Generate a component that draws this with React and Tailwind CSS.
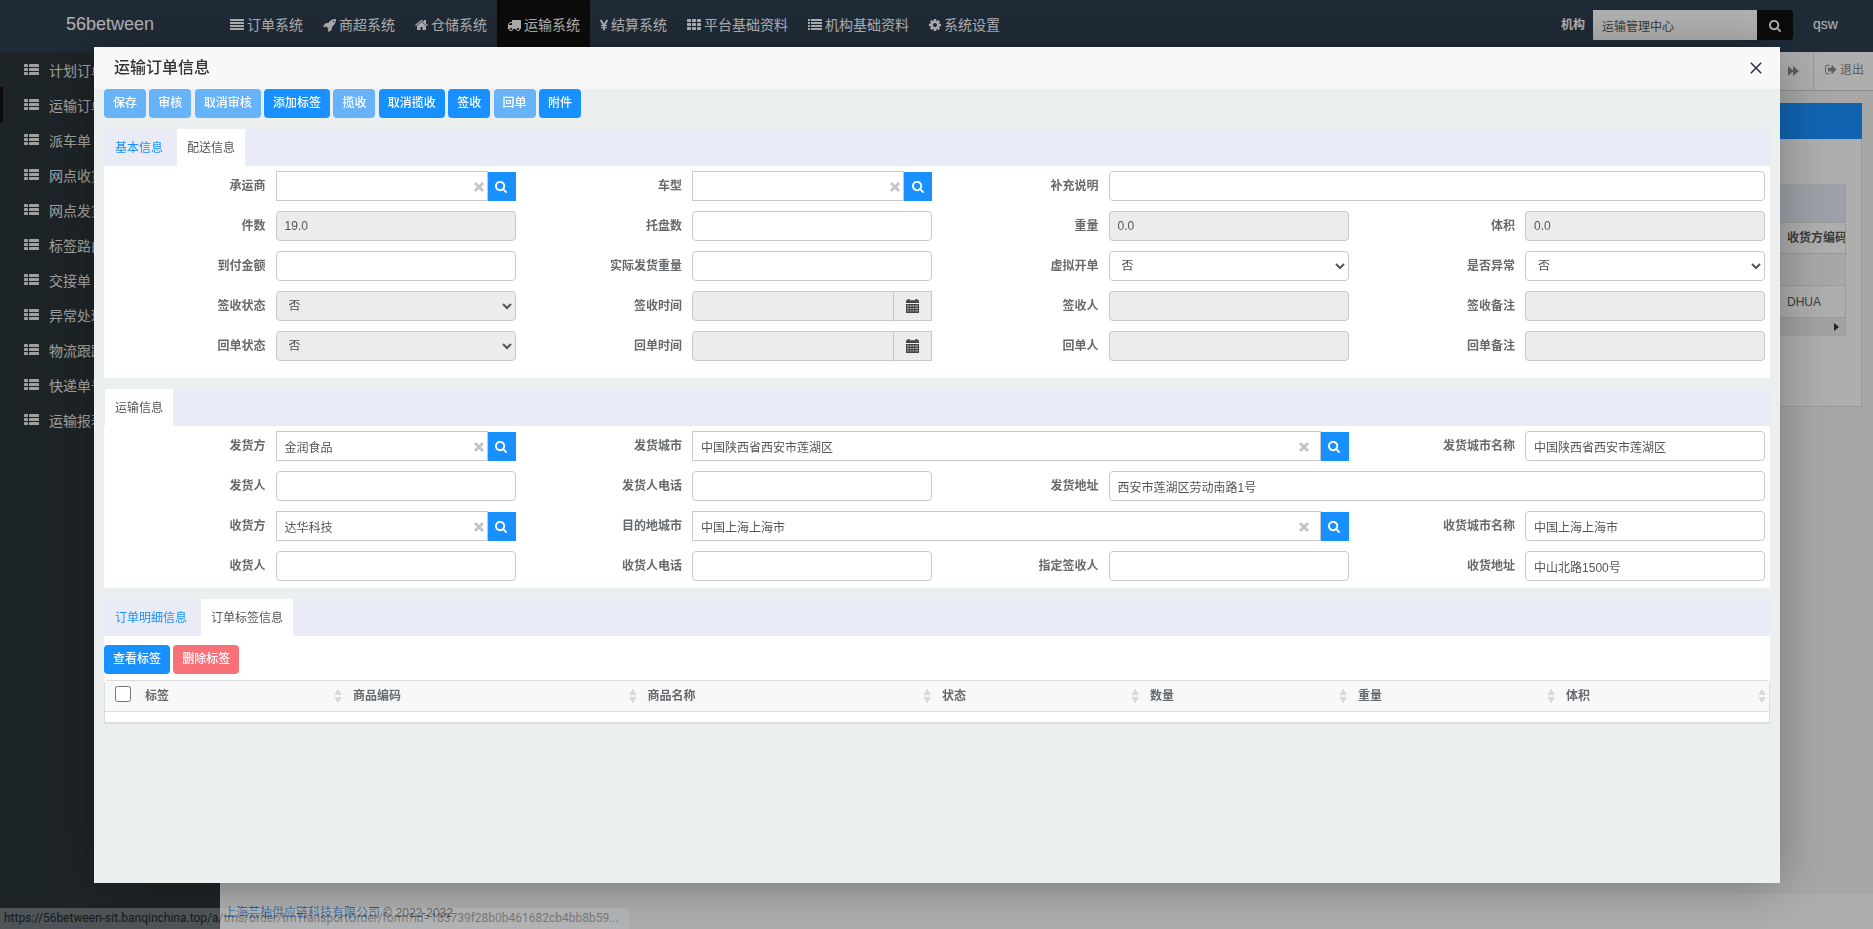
// App.jsx
import React, { useState } from "react";

/* ---------- icons (drawn on a 1792 unit grid, y axis pointing up) ---------- */

const Glyph = ({ d, width = 1792, className = "h-[14px]" }) => (
  <svg
    className={`shrink-0 ${className}`}
    viewBox={`0 0 ${width} 1792`}
    fill="currentColor"
    aria-hidden="true"
  >
    <path transform="translate(0 1536) scale(1 -1)" d={d} />
  </svg>
);

const SearchIcon = ({ className }) => (
  <Glyph
    className={className}
    width={1664}
    d="M1152 704q0 185 -131.5 316.5t-316.5 131.5t-316.5 -131.5t-131.5 -316.5t131.5 -316.5t316.5 -131.5t316.5 131.5t131.5 316.5zM1664 -128q0 -52 -38 -90t-90 -38q-54 0 -90 38l-343 342q-179 -124 -399 -124q-143 0 -273.5 55.5t-225 150t-150 225t-55.5 273.5t55.5 273.5t150 225t225 150t273.5 55.5t273.5 -55.5t225 -150t150 -225t55.5 -273.5q0 -220 -124 -399l343 -343q37 -37 37 -90z"
  />
);

const RocketIcon = () => (
  <Glyph
    width={1664}
    d="M1440 1088q0 40 -28 68t-68 28t-68 -28t-28 -68t28 -68t68 -28t68 28t28 68zM1664 1376q0 -249 -75.5 -430.5t-253.5 -360.5q-81 -80 -195 -176l-20 -379q-2 -16 -16 -26l-384 -224q-7 -4 -16 -4q-12 0 -23 9l-64 64q-13 14 -8 32l85 276l-281 281l-276 -85q-3 -1 -9 -1q-14 0 -23 9l-64 64q-17 19 -5 39l224 384q10 14 26 16l379 20q96 114 176 195q188 187 358 258t431 71q14 0 24 -9.5t10 -22.5z"
  />
);

const HomeIcon = () => (
  <Glyph
    width={1664}
    d="M1408 544v-480q0 -26 -19 -45t-45 -19h-384v384h-256v-384h-384q-26 0 -45 19t-19 45v480q0 1 0.5 3t0.5 3l575 474l575 -474q1 -2 1 -6zM1631 613l-62 -74q-8 -9 -21 -11h-3q-13 0 -21 7l-692 577l-692 -577q-12 -8 -24 -7q-13 2 -21 11l-62 74q-8 10 -7 23.5t11 21.5l719 599q32 26 76 26t76 -26l244 -204v195q0 14 9 23t23 9h192q14 0 23 -9t9 -23v-408l219 -182q10 -8 11 -21.5t-7 -23.5z"
  />
);

const TruckIcon = () => (
  <Glyph
    d="M640 128q0 52 -38 90t-90 38t-90 -38t-38 -90t38 -90t90 -38t90 38t38 90zM256 640h384v256h-158q-13 0 -22 -9l-195 -195q-9 -9 -9 -22v-30zM1536 128q0 52 -38 90t-90 38t-90 -38t-38 -90t38 -90t90 -38t90 38t38 90zM1792 1216v-1024q0 -15 -4 -26.5t-13.5 -18.5t-16.5 -11.5t-23.5 -6t-22.5 -2t-25.5 0t-22.5 0.5q0 -106 -75 -181t-181 -75t-181 75t-75 181h-384q0 -106 -75 -181t-181 -75t-181 75t-75 181h-64q-3 0 -22.5 -0.5t-25.5 0t-22.5 2t-23.5 6t-16.5 11.5t-13.5 18.5t-4 26.5q0 26 19 45t45 19v320q0 8 -0.5 35t0 38t2.5 34.5t6.5 37t14 30.5t22.5 30l198 198q19 19 50.5 32t58.5 13h160v192q0 26 19 45t45 19h1024q26 0 45 -19t19 -45z"
  />
);

const CogIcon = () => (
  <Glyph
    width={1536}
    d="M1024 640q0 106 -75 181t-181 75t-181 -75t-75 -181t75 -181t181 -75t181 75t75 181zM1536 749v-222q0 -12 -8 -23t-20 -13l-185 -28q-19 -54 -39 -91q35 -50 107 -138q10 -12 10 -25t-9 -23q-27 -37 -99 -108t-94 -71q-12 0 -26 9l-138 108q-44 -23 -91 -38q-16 -136 -29 -186q-7 -28 -36 -28h-222q-14 0 -24.5 8.5t-11.5 21.5l-28 184q-49 16 -90 37l-141 -107q-10 -9 -25 -9q-14 0 -25 11q-126 114 -165 168q-7 10 -7 23q0 12 8 23q15 21 51 66.5t54 70.5q-27 50 -41 99l-183 27q-13 2 -21 12.5t-8 23.5v222q0 12 8 23t19 13l186 28q14 46 39 92q-40 57 -107 138q-10 12 -10 24q0 10 9 23q26 36 98.5 107.5t94.5 71.5q13 0 26 -10l138 -107q44 23 91 38q16 136 29 186q7 28 36 28h222q14 0 24.5 -8.5t11.5 -21.5l28 -184q49 -16 90 -37l142 107q9 9 24 9q13 0 25 -10q129 -119 165 -170q7 -8 7 -22q0 -12 -8 -23q-15 -21 -51 -66.5t-54 -70.5q26 -50 41 -98l183 -28q13 -2 21 -12.5t8 -23.5z"
  />
);

const SignOutIcon = () => (
  <Glyph
    width={1664}
    className="h-[13px]"
    d="M640 96q0 -4 1 -20t0.5 -26.5t-3 -23.5t-10 -19.5t-20.5 -6.5h-320q-119 0 -203.5 84.5t-84.5 203.5v704q0 119 84.5 203.5t203.5 84.5h320q13 0 22.5 -9.5t9.5 -22.5q0 -4 1 -20t0.5 -26.5t-3 -23.5t-10 -19.5t-20.5 -6.5h-320q-66 0 -113 -47t-47 -113v-704q0 -66 47 -113t113 -47h312l11.5 -1t11.5 -3t8 -5.5t7 -9t2 -13.5zM1568 640q0 -26 -19 -45l-544 -544q-19 -19 -45 -19t-45 19t-19 45v288h-448q-26 0 -45 19t-19 45v384q0 26 19 45t45 19h448v288q0 26 19 45t45 19t45 -19l544 -544q19 -19 19 -45z"
  />
);

const AlignIcon = () => (
  <svg className="h-[14px] w-[14px] shrink-0" viewBox="0 0 14 14" fill="currentColor" aria-hidden="true">
    <path d="M0 1h14v2H0zM0 4h14v2H0zM0 7h14v2H0zM0 10h14v2H0z" />
  </svg>
);

const YenIcon = () => (
  <svg className="h-[14px] w-[8px] shrink-0" viewBox="0 0 8 14" fill="none" stroke="currentColor" aria-hidden="true">
    <path d="M.7 2 4 7.4 7.3 2M4 7v5.2" strokeWidth="1.9" />
    <path d="M1 7.6h6M1 9.8h6" strokeWidth="1.1" />
  </svg>
);

const ThIcon = () => (
  <svg className="h-[14px] w-[14px] shrink-0" viewBox="0 0 14 14" fill="currentColor" aria-hidden="true">
    {[1, 5, 9].map((y) =>
      [0, 5, 10].map((x) => <rect key={`${x}-${y}`} x={x} y={y} width="4" height="3" rx=".4" />)
    )}
  </svg>
);

const ListIcon = () => (
  <svg className="h-[14px] w-[14px] shrink-0" viewBox="0 0 14 14" fill="currentColor" aria-hidden="true">
    {[1, 4, 7, 10].map((y) => (
      <React.Fragment key={y}>
        <rect x="0" y={y} width="2" height="2" />
        <rect x="3" y={y} width="11" height="2" />
      </React.Fragment>
    ))}
  </svg>
);

const ThListIcon = () => (
  <svg className="mb-[2px] h-[12px] w-[15px] shrink-0" viewBox="0 0 15 12" fill="currentColor" aria-hidden="true">
    {[0, 4, 8].map((y) => (
      <React.Fragment key={y}>
        <rect x="0" y={y} width="4" height="3" rx=".4" />
        <rect x="5" y={y} width="10" height="3" rx=".4" />
      </React.Fragment>
    ))}
  </svg>
);

const ClearIcon = () => (
  <svg className="h-[10px] w-[10px]" viewBox="0 0 10 10" stroke="currentColor" strokeWidth="2.8" aria-hidden="true">
    <path d="M1 1l8 8M9 1L1 9" />
  </svg>
);

const CalendarIcon = () => (
  <svg className="h-[14px] w-[13px]" viewBox="0 0 13 14" fill="currentColor" aria-hidden="true">
    <path d="M0 1.2h1.6V0h2v1.2h5.8V0h2v1.2H13V4H0z" />
    <path
      fillRule="evenodd"
      d="M0 5h13v9H0zM1 6.6v.8h1.8v-.8zM3.8 6.6v.8h1.7v-.8zM6.5 6.6v.8h1.8v-.8zM9.3 6.6v.8h2.6v-.8zM1 9v.8h1.8V9zM3.8 9v.8h1.7V9zM6.5 9v.8h1.8V9zM9.3 9v.8h2.6V9zM1 11.4v.8h1.8v-.8zM3.8 11.4v.8h1.7v-.8zM6.5 11.4v.8h1.8v-.8zM9.3 11.4v.8h2.6v-.8z"
    />
  </svg>
);

const CloseIcon = () => (
  <svg className="h-[12px] w-[12px]" viewBox="0 0 12 12" stroke="currentColor" strokeWidth="1.5" aria-hidden="true">
    <path d="M.8.8l10.4 10.4M11.2.8L.8 11.2" />
  </svg>
);

const ForwardIcon = () => (
  <svg className="h-[10px] w-[11px]" viewBox="0 0 11 10" fill="currentColor" aria-hidden="true">
    <path d="M0 0l5 4.5V0l6 5-6 5V5.5L0 10z" />
  </svg>
);

const SortIcon = () => (
  <svg className="h-[16px] w-[8px] shrink-0" viewBox="0 0 8 16" fill="#d8d8d8" aria-hidden="true">
    <path d="M4 .5L7.8 7H.2zM4 15.5L7.8 9H.2z" />
  </svg>
);

/* ---------- data ---------- */

const topMenus = [
  { name: "订单系统", Icon: AlignIcon },
  { name: "商超系统", Icon: RocketIcon },
  { name: "仓储系统", Icon: HomeIcon },
  { name: "运输系统", Icon: TruckIcon, active: true },
  { name: "结算系统", Icon: YenIcon },
  { name: "平台基础资料", Icon: ThIcon },
  { name: "机构基础资料", Icon: ListIcon },
  { name: "系统设置", Icon: CogIcon },
];

const sideMenus = [
  "计划订单",
  "运输订单",
  "派车单",
  "网点收货",
  "网点发货",
  "标签路由",
  "交接单",
  "异常处理",
  "物流跟踪",
  "快递单号",
  "运输报表",
];

const actions = [
  { name: "保存", disabled: true },
  { name: "审核", disabled: true },
  { name: "取消审核", disabled: true },
  { name: "添加标签" },
  { name: "揽收", disabled: true },
  { name: "取消揽收" },
  { name: "签收" },
  { name: "回单", disabled: true },
  { name: "附件" },
];

const deliveryFields = [
  { label: "承运商", type: "search" },
  { label: "车型", type: "search" },
  { label: "补充说明", wide: true },
  { label: "件数", value: "19.0", disabled: true },
  { label: "托盘数" },
  { label: "重量", value: "0.0", disabled: true },
  { label: "体积", value: "0.0", disabled: true },
  { label: "到付金额" },
  { label: "实际发货重量" },
  { label: "虚拟开单", type: "select" },
  { label: "是否异常", type: "select" },
  { label: "签收状态", type: "select", disabled: true },
  { label: "签收时间", type: "date" },
  { label: "签收人", disabled: true },
  { label: "签收备注", disabled: true },
  { label: "回单状态", type: "select", disabled: true },
  { label: "回单时间", type: "date" },
  { label: "回单人", disabled: true },
  { label: "回单备注", disabled: true },
];

const transportFields = [
  { label: "发货方", type: "search", value: "金润食品" },
  { label: "发货城市", type: "search", value: "中国陕西省西安市莲湖区", wide: true },
  { label: "发货城市名称", value: "中国陕西省西安市莲湖区" },
  { label: "发货人" },
  { label: "发货人电话" },
  { label: "发货地址", value: "西安市莲湖区劳动南路1号", wide: true },
  { label: "收货方", type: "search", value: "达华科技" },
  { label: "目的地城市", type: "search", value: "中国上海上海市", wide: true },
  { label: "收货城市名称", value: "中国上海上海市" },
  { label: "收货人" },
  { label: "收货人电话" },
  { label: "指定签收人" },
  { label: "收货地址", value: "中山北路1500号" },
];

const labelColumns = [
  { name: "标签", width: "w-[12.5%]" },
  { name: "商品编码", width: "w-[17.7%]" },
  { name: "商品名称", width: "w-[17.7%]" },
  { name: "状态", width: "w-[12.5%]" },
  { name: "数量", width: "w-[12.5%]" },
  { name: "重量", width: "w-[12.5%]" },
  { name: "体积", width: "" },
];

/* ---------- form parts ---------- */

const inputBase =
  "h-[30px] w-full min-w-0 border border-[#c8c8c8] px-2 text-xs text-[#555] outline-none disabled:bg-[#ececec] disabled:opacity-100";

const Control = ({ id, type, value = "", disabled, wide }) => {
  const [text, setText] = useState(value);

  if (type === "search") {
    return (
      <div className="flex items-end">
        <div className="relative flex-1">
          <input
            id={id}
            type="text"
            value={text}
            onChange={(e) => setText(e.target.value)}
            className={`${inputBase} bg-white pr-6`}
          />
          <button
            type="button"
            aria-label="清除"
            onClick={() => setText("")}
            className={`absolute top-[11px] text-[#c4c4c4] ${wide ? "right-3" : "right-1"}`}
          >
            <ClearIcon />
          </button>
        </div>
        <button
          type="button"
          aria-label="查询"
          className="flex h-[29px] w-7 items-center justify-center bg-[#1890ff] text-white"
        >
          <SearchIcon className="h-[13px]" />
        </button>
      </div>
    );
  }

  if (type === "select") {
    return (
      <select
        id={id}
        disabled={disabled}
        className={`${inputBase} rounded ${disabled ? "bg-[#ececec]" : "bg-white"}`}
      >
        <option>否</option>
        <option>是</option>
      </select>
    );
  }

  if (type === "date") {
    return (
      <div className="flex">
        <input id={id} type="text" disabled className={`${inputBase} flex-1 rounded-l`} />
        <button
          type="button"
          aria-label="选择日期"
          className="flex h-[30px] w-[38px] shrink-0 items-center justify-center border border-l-0 border-[#c8c8c8] bg-[#ececec] text-[#444]"
        >
          <CalendarIcon />
        </button>
      </div>
    );
  }

  return (
    <input
      id={id}
      type="text"
      value={text}
      disabled={disabled}
      onChange={(e) => setText(e.target.value)}
      className={`${inputBase} rounded ${disabled ? "" : "bg-white"}`}
    />
  );
};

const FieldGrid = ({ name, fields, className }) => (
  <div className={`grid grid-cols-20 gap-y-[10px] bg-white pt-[5px] ${className}`}>
    {fields.map((field, i) => {
      const id = `${name}-${i}`;
      return (
        <React.Fragment key={id}>
          <label
            htmlFor={id}
            className="col-span-2 self-center px-[5px] text-right text-xs font-bold whitespace-nowrap text-[#676a6c]"
          >
            {field.label}
          </label>
          <div className={`px-[5px] ${field.wide ? "col-span-8" : "col-span-3"}`}>
            <Control id={id} {...field} />
          </div>
        </React.Fragment>
      );
    })}
  </div>
);

const Tabs = ({ items, active }) => (
  <div className="mt-[11px] flex gap-[2px] bg-[#e9ecf6]" role="tablist">
    {items.map((item) => (
      <button
        key={item}
        type="button"
        role="tab"
        aria-selected={item === active}
        className={`h-[37px] border-x px-[10px] text-xs ${
          item === active
            ? "border-[#eee] bg-white text-[#555]"
            : "border-transparent text-[#1890ff]"
        }`}
      >
        {item}
      </button>
    ))}
  </div>
);

const ActionButton = ({ children, color, disabled }) => (
  <button
    type="button"
    disabled={disabled}
    className={`h-[29px] rounded px-[9px] pb-[2px] align-top text-xs font-medium text-white ${color}`}
  >
    {children}
  </button>
);

/* ---------- page ---------- */

const TopBar = () => (
  <header className="flex h-13 bg-[#2d3e50] text-white">
    <a href="#" className="w-[220px] text-center text-lg leading-[48px]">
      56between
    </a>
    <nav className="flex flex-1">
      {topMenus.map(({ name, Icon, active }) => (
        <a
          key={name}
          href="#"
          className={`flex h-[50px] items-center gap-[3px] px-[10px] text-sm whitespace-nowrap ${
            active ? "bg-[#111]" : ""
          }`}
        >
          <Icon />
          {name}
        </a>
      ))}
    </nav>
    <div className="flex h-[50px] items-center">
      <label htmlFor="org" className="mr-2 text-xs font-bold">
        机构
      </label>
      <input
        id="org"
        type="text"
        defaultValue="运输管理中心"
        className="h-[30px] w-[164px] bg-white px-[9px] text-xs text-[#555] outline-none"
      />
      <button
        type="button"
        aria-label="查询机构"
        className="flex h-[30px] w-9 items-center justify-center rounded-r bg-[#111]"
      >
        <SearchIcon className="h-[13px]" />
      </button>
      <a href="#" className="w-20 pb-[2px] pl-5 text-sm">
        qsw
      </a>
    </div>
  </header>
);

const SideBar = () => (
  <aside className="w-[220px] shrink-0 bg-[#2a3438]">
    <ul>
      {sideMenus.map((name, i) => (
        <li key={name}>
          <a
            href="#"
            className={`flex h-[35px] items-center gap-[10px] border-l-3 pt-[3px] pl-[21px] text-sm text-[#e6e6e6] ${
              i === 1 ? "border-[#111]" : "border-transparent"
            }`}
          >
            <ThListIcon />
            {name}
          </a>
        </li>
      ))}
    </ul>
  </aside>
);

const OrderList = () => (
  <main className="flex min-w-0 flex-1 flex-col bg-[#f0f0f0]">
    <div className="flex h-[39px] justify-end border-b border-[#ccc] bg-[#fafafa] text-xs text-[#888]">
      <button type="button" aria-label="下一个" className="flex w-[41px] items-center justify-center border-r border-[#ddd]">
        <ForwardIcon />
      </button>
      <a href="#" className="flex w-[59px] items-center gap-[3px] pb-[3px] pl-[11px]">
        <SignOutIcon />
        退出
      </a>
    </div>
    <section className="mx-[11px] mt-3 h-[304px] border border-[#ddd] bg-[#fafafa]">
      <div className="-mx-px -mt-px h-9 bg-[#1890ff]" />
      <div className="mx-[15px] mt-[45px] border-r border-[#ddd]">
        <div className="h-[38px] bg-[#e3e6f2]" />
        <table className="w-full table-fixed border-collapse text-left text-xs text-[#555]">
          <thead>
            <tr className="h-[31px] border-y border-[#ddd]">
              <th />
              <th className="w-[66px] overflow-hidden pl-2 whitespace-nowrap">收货方编码</th>
            </tr>
          </thead>
          <tbody>
            <tr className="h-8 border-b border-[#ddd] bg-[#f0f0f0]">
              <td />
              <td />
            </tr>
            <tr className="h-8 border-b border-[#ddd]">
              <td />
              <td className="pl-2">DHUA</td>
            </tr>
          </tbody>
        </table>
        <div className="flex h-[18px] items-center justify-end bg-[#e8e8e8] pr-[6px]">
          <svg className="h-2 w-[5px]" viewBox="0 0 5 8" fill="#333" aria-hidden="true">
            <path d="M0 0l5 4-5 4z" />
          </svg>
        </div>
      </div>
    </section>
    <footer className="mt-auto h-[35px] bg-[#f8f8f8] px-1 text-xs leading-[38px] text-[#555]">
      <a href="#" className="text-[#2a7bd0]">
        上海芸柚供应链科技有限公司
      </a>{" "}
      © 2022-2032
    </footer>
  </main>
);

const OrderModal = () => (
  <div
    role="dialog"
    aria-modal="true"
    aria-label="运输订单信息"
    className="fixed top-[47px] right-[93px] bottom-[46px] left-[94px] overflow-auto bg-[#ebeff0] shadow-[1px_1px_50px_rgba(0,0,0,0.3)]"
  >
    <div className="flex h-[42px] items-center justify-between bg-[#f8f8f8] pr-[18px] pl-5">
      <h2 className="text-base font-medium text-[#333]">运输订单信息</h2>
      <button type="button" aria-label="关闭" className="text-[#2e2d3c]">
        <CloseIcon />
      </button>
    </div>

    <div className="px-[10px]">
      {/* toolbar */}
      <div className="h-[29px] text-xs">
        {actions.map(({ name, disabled }) => (
          <React.Fragment key={name}>
            <ActionButton disabled={disabled} color={disabled ? "bg-[#66b3fa]" : "bg-[#1890ff]"}>
              {name}
            </ActionButton>{" "}
          </React.Fragment>
        ))}
      </div>

      <Tabs items={["基本信息", "配送信息"]} active="配送信息" />
      <FieldGrid name="delivery" fields={deliveryFields} className="pb-[17px]" />

      <Tabs items={["运输信息"]} active="运输信息" />
      <FieldGrid name="transport" fields={transportFields} className="pb-[7px]" />

      <Tabs items={["订单明细信息", "订单标签信息"]} active="订单标签信息" />
      <div className="bg-white pt-[9px]">
        <div className="h-[29px] text-xs">
          <ActionButton color="bg-[#1890ff]">查看标签</ActionButton>{" "}
          <ActionButton color="bg-[#f87078]">删除标签</ActionButton>
        </div>
        <div className="mt-[6px] rounded-t border border-b-2 border-[#ddd]">
          <table className="w-full table-fixed border-collapse text-left text-xs text-[#676a6c]">
            <thead>
              <tr className="h-[30px] border-b border-[#ddd] bg-[#f7f8fa]">
                <th className="w-8 pb-1 pl-[10px]">
                  <input type="checkbox" aria-label="全选" className="block h-4 w-4" />
                </th>
                {labelColumns.map(({ name, width }) => (
                  <th key={name} className={`pr-[3px] pl-2 ${width}`}>
                    <div className="flex items-center justify-between">
                      {name}
                      <SortIcon />
                    </div>
                  </th>
                ))}
              </tr>
            </thead>
            <tbody>
              <tr className="h-[11px]">
                <td colSpan={8} />
              </tr>
            </tbody>
          </table>
        </div>
      </div>
    </div>
  </div>
);

export default function App() {
  return (
    <div className="flex min-h-screen flex-col font-['Liberation_Sans','Noto_Sans_CJK_SC',sans-serif]">
      <TopBar />
      <div className="flex flex-1">
        <SideBar />
        <OrderList />
      </div>
      <div className="fixed inset-0 bg-black/30" />
      <OrderModal />
      {/* link preview in the window corner */}
      <div className="fixed bottom-0 left-0 h-[21px] rounded-tr bg-[#c0c4c8] pr-[10px] pl-1 font-[Roboto,sans-serif] text-xs leading-[21px] text-black opacity-30">
        https://56between-sit.banqinchina.top/a/tms/order/tmTransportOrder/form?id=183739f28b0b461682cb4bb8b59...
      </div>
    </div>
  );
}
